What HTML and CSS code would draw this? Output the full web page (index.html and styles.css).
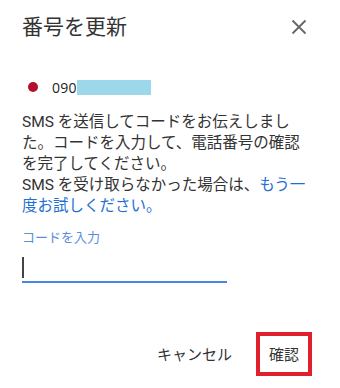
FILE: index.html
```html
<!DOCTYPE html>
<html lang="ja">
<head>
<meta charset="utf-8">
<link rel="stylesheet" href="styles.css">
</head>
<body>
<div class="dialog">
  <div class="header">
    <h1 class="title">番号を更新</h1>
    <button class="close" aria-label="閉じる">
      <svg width="16" height="16" viewBox="0 0 16 16"><path d="M1.5 1.5 L14.5 14.5 M14.5 1.5 L1.5 14.5" stroke="#666" stroke-width="1.8" fill="none"/></svg>
    </button>
  </div>
  <div class="phone">
    <span class="dot"></span>
    <span class="num">090</span><span class="mask"></span>
  </div>
  <p class="msg">SMS を送信してコードをお伝えしました。コードを入力して、電話番号の確認を完了してください。<br>SMS を受け取らなかった場合は、<a class="link" href="#">もう一度お試しください。</a></p>
  <label class="label">コードを入力</label>
  <div class="input"><span class="caret"></span></div>
  <div class="footer">
    <button class="btn">キャンセル</button>
    <button class="btn confirm">確認</button>
  </div>
</div>
</body>
</html>
```
FILE: styles.css
```css
* { box-sizing: border-box; }
html, body { margin: 0; padding: 0; background: #fff; }
body {
  width: 340px;
  height: 388px;
  font-family: Roboto, "Noto Sans CJK JP", sans-serif;
  color: #333;
  overflow: hidden;
}
.dialog {
  padding: 11px 22px 0 22px;
}
.header {
  display: flex;
  justify-content: space-between;
  align-items: center;
}
.title {
  margin: 0;
  font-family: "Noto Sans CJK JP", sans-serif;
  font-weight: 400;
  font-size: 21px;
  line-height: 28px;
  color: #333;
}
.close {
  border: 0;
  background: none;
  padding: 0;
  margin-right: 11px;
  margin-top: 4px;
  width: 16px;
  height: 16px;
  display: flex;
}
.phone {
  display: flex;
  align-items: center;
  margin-top: 40px;
  height: 16px;
}
.dot {
  width: 10px;
  height: 10px;
  border-radius: 50%;
  background: #b3102c;
  margin-left: 6px;
  margin-right: 14px;
}
.num {
  font-family: "Open Sans", sans-serif;
  font-size: 14px;
  color: #222;
  letter-spacing: 0.3px;
}
.mask {
  width: 74px;
  height: 15px;
  background: #9dd8ea;
}
.msg {
  width: 290px;
  margin: 17px 0 0 0;
  font-size: 15.5px;
  line-height: 21px;
  color: #333;
}
.link {
  color: #1f6fd1;
  text-decoration: none;
}
.label {
  display: block;
  margin-top: 13px;
  font-size: 13px;
  line-height: 16px;
  color: #5b8ed8;
}
.input {
  width: 205px;
  height: 26px;
  margin-top: 11px;
  border-bottom: 2px solid #4a85de;
}
.caret {
  display: block;
  width: 2px;
  height: 21px;
  background: #444;
  margin-top: 2px;
}
.footer {
  display: flex;
  justify-content: flex-end;
  align-items: center;
  gap: 24px;
  margin-top: 49px;
  margin-right: 6px;
}
.btn {
  border: 0;
  background: none;
  font-family: "Noto Sans CJK JP", sans-serif;
  font-size: 15px;
  color: #333;
  padding: 0;
  line-height: 20px;
}
.confirm {
  border: 4px solid #e0202c;
  width: 56px;
  height: 44px;
  padding: 0;
  display: flex;
  align-items: center;
  justify-content: center;
}
```
